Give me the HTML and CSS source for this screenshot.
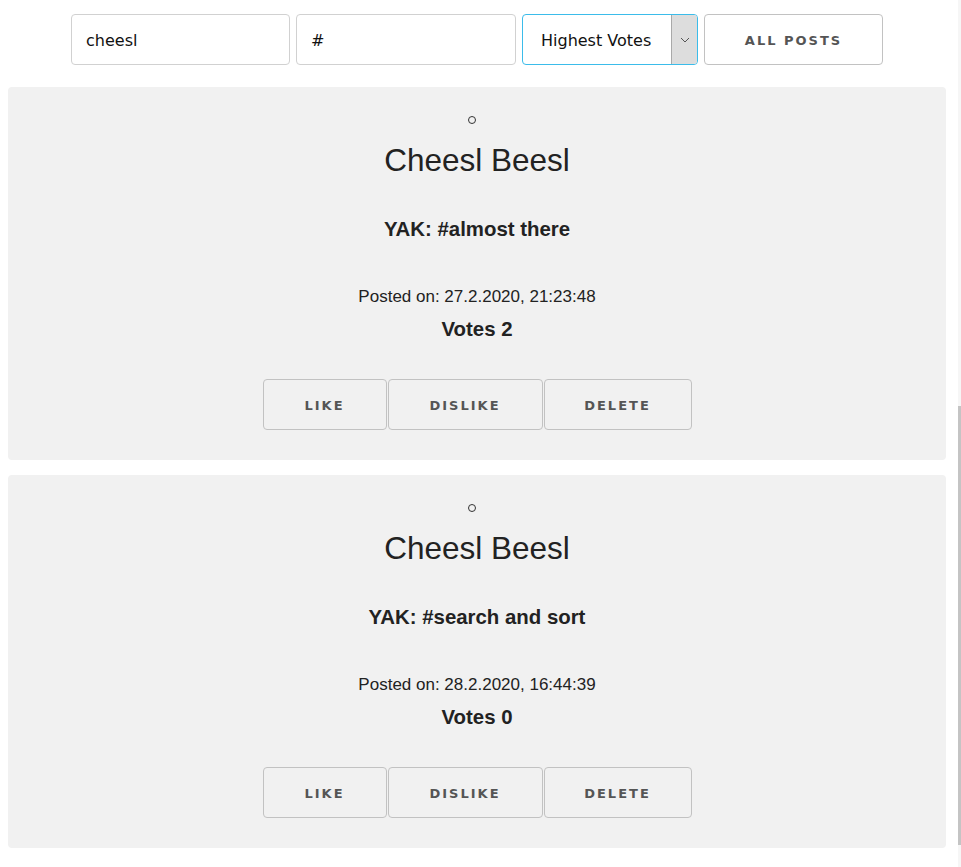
FILE: index.html
```html
<!DOCTYPE html>
<html>
<head>
<meta charset="utf-8">
<title>Yaks</title>
<link rel="stylesheet" href="styles.css">
</head>
<body>
<div class="page">
  <form class="controls">
    <input class="field field-name" type="text" value="cheesl">
    <input class="field" type="text" value="#">
    <div class="select">
      <span class="select-text">Highest Votes</span>
      <span class="select-arrow">
        <svg width="10" height="6" viewBox="0 0 10 6"><path d="M1 1 L5 5 L9 1" fill="none" stroke="#555" stroke-width="1"/></svg>
      </span>
    </div>
    <button class="btn btn-white" type="button">All posts</button>
  </form>

  <div class="card">
    <span class="ring"></span>
    <div class="name">Cheesl Beesl</div>
    <div class="yak">YAK: #almost there</div>
    <div class="posted">Posted on: 27.2.2020, 21:23:48</div>
    <div class="votes">Votes 2</div>
    <div class="actions">
      <button class="btn btn-like" type="button">Like</button>
      <button class="btn btn-dislike" type="button">Dislike</button>
      <button class="btn btn-delete" type="button">Delete</button>
    </div>
  </div>

  <div class="card">
    <span class="ring"></span>
    <div class="name">Cheesl Beesl</div>
    <div class="yak">YAK: #search and sort</div>
    <div class="posted">Posted on: 28.2.2020, 16:44:39</div>
    <div class="votes">Votes 0</div>
    <div class="actions">
      <button class="btn btn-like" type="button">Like</button>
      <button class="btn btn-dislike" type="button">Dislike</button>
      <button class="btn btn-delete" type="button">Delete</button>
    </div>
  </div>
</div>
<div class="scroll-track"></div>
<div class="scroll-thumb"></div>
</body>
</html>
```
FILE: styles.css
```css
html, body {
  margin: 0;
  padding: 0;
  background: #ffffff;
  overflow: hidden;
}
body {
  font-family: "Liberation Sans", Arial, sans-serif;
  color: #222222;
}
.page {
  width: 938px;
  padding: 14px 0 0 8px;
}
.controls {
  display: flex;
  justify-content: center;
  gap: 6px;
  margin: 0 0 22px 0;
}
.field {
  box-sizing: border-box;
  width: 220px;
  height: 51px;
  border: 1px solid #d1d1d1;
  border-radius: 4px;
  padding: 2px 14px 0 14px;
  font-family: "DejaVu Sans", Verdana, sans-serif;
  font-size: 16px;
  color: #111111;
  background: #ffffff;
  outline: none;
}
.field-name {
  width: 219px;
}
.select {
  box-sizing: border-box;
  width: 176px;
  height: 51px;
  border: 1px solid #3bbcea;
  border-radius: 4px;
  display: flex;
  align-items: stretch;
  overflow: hidden;
  background: #ffffff;
}
.select-text {
  flex: 1;
  display: flex;
  align-items: center;
  padding: 2px 0 0 18px;
  font-family: "DejaVu Sans", Verdana, sans-serif;
  font-size: 16px;
  color: #111111;
}
.select-arrow {
  width: 25px;
  background: #dddddd;
  border-left: 1px solid #a9a9a9;
  display: flex;
  align-items: center;
  justify-content: center;
}
.btn {
  box-sizing: border-box;
  height: 51px;
  margin: 0;
  padding: 0;
  border: 1px solid #c2c2c2;
  border-radius: 4px;
  background: transparent;
  font-family: "DejaVu Sans", Verdana, sans-serif;
  font-weight: bold;
  font-size: 13px;
  letter-spacing: 2px;
  text-transform: uppercase;
  color: #555555;
  cursor: pointer;
}
.btn-white {
  width: 179px;
  background: #ffffff;
  padding-top: 2px;
}
.btn-like {
  width: 124px;
  padding-top: 1px;
}
.btn-dislike {
  width: 155px;
  padding-top: 1px;
}
.btn-delete {
  width: 148px;
  padding-top: 1px;
}
.card {
  background: #f1f1f1;
  border-radius: 4px;
  padding: 29px 0 30px 0;
  margin-bottom: 15px;
  display: flex;
  flex-direction: column;
  align-items: center;
  text-align: center;
}
.ring {
  box-sizing: border-box;
  display: block;
  width: 8px;
  height: 8px;
  border: 1px solid #333333;
  border-radius: 50%;
  margin-left: -10px;
}
.name {
  margin-top: 16px;
  font-size: 31.5px;
  line-height: 40px;
  color: #222222;
}
.yak {
  margin-top: 37px;
  font-size: 20.4px;
  line-height: 24px;
  font-weight: bold;
  color: #222222;
}
.posted {
  margin-top: 46px;
  font-size: 17px;
  line-height: 20px;
  color: #222222;
}
.votes {
  margin-top: 10px;
  font-size: 20.4px;
  line-height: 24px;
  font-weight: bold;
  color: #222222;
}
.actions {
  margin-top: 38px;
  display: flex;
  justify-content: center;
  gap: 1px;
}
.scroll-track {
  position: fixed;
  top: 0;
  right: 0;
  width: 3px;
  height: 867px;
  background: #f6f6f6;
}
.scroll-thumb {
  position: fixed;
  top: 406px;
  right: 0;
  width: 3px;
  height: 439px;
  background: #c4c4c4;
}
```
